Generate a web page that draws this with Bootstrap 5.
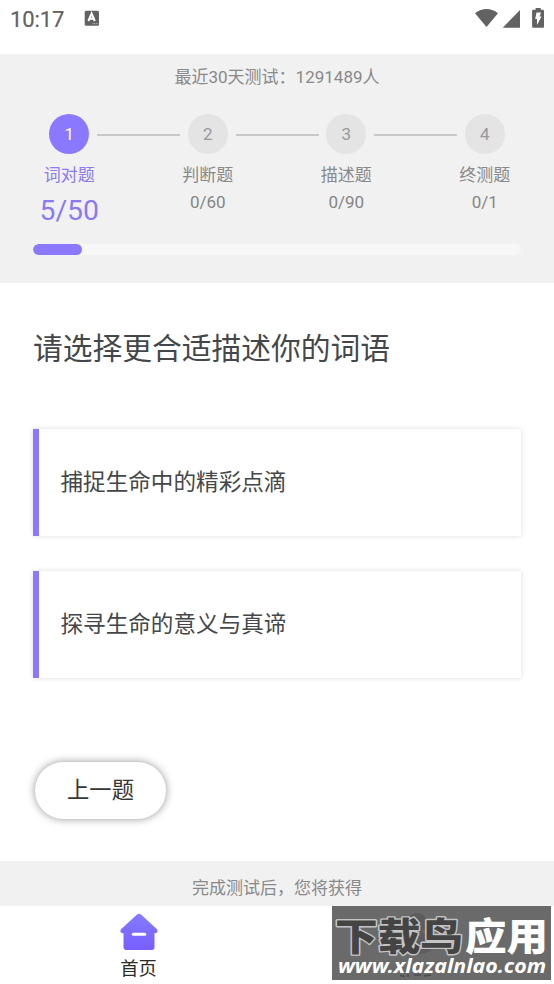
<!DOCTYPE html>
<html lang="zh-CN">
<head>
<meta charset="utf-8">
<meta name="viewport" content="width=device-width, initial-scale=1">
<title>词对题</title>
<link href="https://cdn.jsdelivr.net/npm/bootstrap@5.3.0/dist/css/bootstrap.min.css" rel="stylesheet">
<style>
  :root { --violet: #8a78ff; --grey-text: #898989; }
  body { font-family: Roboto, "Noto Sans CJK SC", sans-serif; color: #44474a; font-size: 17px; line-height: 24px; height: 984px; overflow: hidden; }
  .status-bar { height: 54px; padding: 7px 9px 0 10px; color: #626262; }
  .clock { font-size: 22px; line-height: 26px; letter-spacing: -.1px; -webkit-text-stroke: .2px #626262; }
  .ime-icon { margin: 3px 0 0 20px; }
  .quiz-head { height: 229px; background: #f1f1f1; color: var(--grey-text); }
  .tested { padding-top: 11px; }
  .steps { margin-top: 25px; }
  .step-dot { width: 40px; height: 40px; background: #e4e4e4; color: #999; }
  .step-rail { height: 2px; background: #c9c9c9; width: 83px; left: 97px; top: 20px; }
  .step-name { margin-top: 9px; }
  .step-count { margin-top: 3px; color: #858585; }
  .is-active .step-dot { background: var(--violet); color: #fff; }
  .is-active .step-name, .is-active .step-count { color: #8b7af0; }
  .is-active .step-count { font-size: 28.4px; margin-top: 12px; }
  .bar-track { margin: 21px 33px 0; height: 11px; background: #f7f7f7; --bs-progress-border-radius: 6px; }
  .bar-fill { background: var(--violet); border-radius: 6px; }
  .quiz-body { height: 578px; padding: 44px 33px 0 33px; }
  .question { font-size: 29.75px; line-height: 44px; }
  .options { margin-top: 58px; gap: 35px; }
  .option { height: 107px; border: 0; border-left: 6px solid var(--violet); border-radius: 0; padding: 0 0 0 21.500px; font-size: 22.6px; color: inherit; background: #fff; box-shadow: 0 0 5px rgba(0,0,0,.14); }
  .prev-btn { margin: 84px 0 0 2px; width: 131px; height: 57px; font-size: 22.3px; line-height: 33px; color: #363636; background: #fff; padding: 0 0 1px; box-shadow: 0 0 8px rgba(0,0,0,.42); }
  .finish-note { height: 45px; background: #f1f1f1; color: var(--grey-text); padding-top: 15px; }
  .tab { width: 277px; height: 77px; padding-top: 7px; font-size: 18.3px; color: #2a2a2a; }
  .tab-label { margin-top: 6px; }
  .stamp { left: 332px; top: 906px; width: 219px; height: 74px; background: #6a6a6a; overflow: visible; }
</style>
</head>
<body class="bg-white position-relative">
<header class="status-bar d-flex align-items-start">
  <span class="clock">10:17</span>
  <svg class="ime-icon" width="16" height="16" viewBox="0 0 16 16"><rect x=".7" y=".7" width="14.3" height="15" rx="1.5" fill="#626262"/><path d="M4.400 11 7.600 3.500 10.800 11M5.500 8.700h4.200" fill="none" stroke="#fff" stroke-width="2"/><path d="M8.500 13.700h5.500" stroke="#ddd" stroke-width=".8" stroke-dasharray="1 .6"/></svg>
  <svg class="ms-auto" width="70" height="22" viewBox="475 7 70 22" fill="#626262"><path d="M475 13.200Q486.500 4.800 498 13.200L486.500 27ZM502.700 27.700 520 10V27.700Z"/><path d="M533.200 9.800H535.600V8H540.700V9.800H543Q544 9.800 544 11V26.500Q544 27.700 543 27.700H533.200Q532.100 27.700 532.100 26.500V11Q532.100 9.800 533.200 9.800Z"/><path d="M536.500 12.500H541L539.600 16.600H541.500L537 25V19H535.200Z" fill="#fff"/></svg>
</header>

<section class="quiz-head">
  <div class="tested text-center">最近30天测试：1291489人</div>
  <div class="steps row g-0 text-center">
    <div class="col is-active position-relative">
      <div class="step-dot rounded-circle d-flex align-items-center justify-content-center mx-auto">1</div>
      <div class="step-rail position-absolute"></div>
      <div class="step-name">词对题</div><div class="step-count">5/50</div>
    </div>
    <div class="col position-relative">
      <div class="step-dot rounded-circle d-flex align-items-center justify-content-center mx-auto">2</div>
      <div class="step-rail position-absolute"></div>
      <div class="step-name">判断题</div><div class="step-count">0/60</div>
    </div>
    <div class="col position-relative">
      <div class="step-dot rounded-circle d-flex align-items-center justify-content-center mx-auto">3</div>
      <div class="step-rail position-absolute"></div>
      <div class="step-name">描述题</div><div class="step-count">0/90</div>
    </div>
    <div class="col">
      <div class="step-dot rounded-circle d-flex align-items-center justify-content-center mx-auto">4</div>
      <div class="step-name">终测题</div><div class="step-count">0/1</div>
    </div>
  </div>
  <div class="progress bar-track"><div class="progress-bar bar-fill" style="width:10%"></div></div>
</section>

<main class="quiz-body">
  <div class="question">请选择更合适描述你的词语</div>
  <div class="options d-flex flex-column">
    <button class="option d-flex align-items-center w-100">捕捉生命中的精彩点滴</button>
    <button class="option d-flex align-items-center w-100">探寻生命的意义与真谛</button>
  </div>
  <button class="btn prev-btn rounded-pill border-0">上一题</button>
</main>

<div class="finish-note text-center">完成测试后，您将获得</div>
<nav class="d-flex">
  <a class="tab text-center text-decoration-none" href="#">
    <svg class="d-block mx-auto" width="38" height="38" viewBox="0 0 38 38"><defs><linearGradient id="roof" x1="0" y1="0" x2="0" y2="1"><stop stop-color="#857cff"/><stop offset="1" stop-color="#775eff"/></linearGradient></defs><path d="M17 1.400Q19 .200 21 1.400L36.700 16Q38.300 18 37 19.500 36.200 20.400 34.500 20.300V34Q34.500 36.900 31.700 36.900H6.400Q3.500 36.900 3.500 34V20.300Q1.700 20.400 1 19.500-.400 18 1.300 16Z" fill="url(#roof)"/><path d="M13.300 21.300H24.700" stroke="#fff" stroke-width="3" stroke-linecap="round"/></svg>
    <div class="tab-label">首页</div>
  </a>
</nav>

<svg class="stamp position-absolute" viewBox="0 0 219 74" role="img">
  <circle cx="85" cy="17" r="10" fill="#5c5c5c"/><ellipse cx="85" cy="37" rx="18" ry="11" fill="#5c5c5c"/>
  <path d="M68 69.500l5 1M76 68v3M82 69h7M92 70l7-1" stroke="#4c4c4c" stroke-width="1.500"/>
  <g font-family="Noto Sans CJK SC, sans-serif" font-weight="900" font-size="38" stroke-linejoin="round">
    <text x="3" y="44" textLength="128" lengthAdjust="spacingAndGlyphs" fill="#444" stroke="#c4c4c4" stroke-width="2.800" paint-order="stroke">下载鸟</text>
    <text x="133" y="44" textLength="83" lengthAdjust="spacingAndGlyphs" fill="#fff">应用</text>
  </g>
  <text x="6" y="67" textLength="208" lengthAdjust="spacingAndGlyphs" font-family="Noto Sans, sans-serif" font-style="italic" font-weight="700" font-size="20" fill="#fff">www.xlazalnlao.com</text>
</svg>
<script src="https://cdn.jsdelivr.net/npm/bootstrap@5.3.0/dist/js/bootstrap.bundle.min.js"></script>
</body>
</html>
